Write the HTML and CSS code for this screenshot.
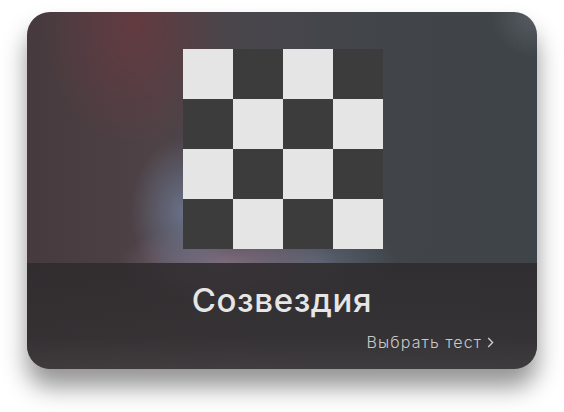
FILE: index.html
```html
<!DOCTYPE html>
<html lang="ru">
<head>
<meta charset="utf-8">
<title>Созвездия</title>
<link rel="stylesheet" href="styles.css">
</head>
<body>
<div class="card">
  <div class="art">
    <div class="board">
      <span class="l"></span><span class="d"></span><span class="l"></span><span class="d"></span>
      <span class="d"></span><span class="l"></span><span class="d"></span><span class="l"></span>
      <span class="l"></span><span class="d"></span><span class="l"></span><span class="d"></span>
      <span class="d"></span><span class="l"></span><span class="d"></span><span class="l"></span>
    </div>
  </div>
  <div class="band">
    <h1 class="title">Созвездия</h1>
    <a class="link" href="#">Выбрать тест <svg class="chev" width="7" height="11" viewBox="0 0 7 11"><path d="M1.2 1 L5.6 5.5 L1.2 10" fill="none" stroke="currentColor" stroke-width="1.4"/></svg></a>
  </div>
</div>
</body>
</html>
```

FILE: styles.css
```css
* { box-sizing: border-box; }
html, body { margin: 0; padding: 0; background: #ffffff; }
body {
  width: 564px;
  height: 412px;
  padding: 12px 27px 0 27px;
  font-family: Inter, "Noto Sans", sans-serif;
}
.card {
  width: 510px;
  height: 357px;
  border-radius: 23px;
  overflow: hidden;
  display: flex;
  flex-direction: column;
  box-shadow: 0 18px 24px rgba(0,0,0,0.42);
  background:
    radial-gradient(ellipse 55px 75px at 158px 200px, rgba(110,122,148,0.85), rgba(110,122,148,0) 100%),
    radial-gradient(ellipse 110px 40px at 200px 252px, rgba(140,118,138,0.8), rgba(140,118,138,0) 100%),
    radial-gradient(ellipse 80px 40px at 290px 250px, rgba(100,115,135,0.6), rgba(100,115,135,0) 100%),
    radial-gradient(ellipse 90px 120px at 105px 15px, rgba(100,58,64,0.9), rgba(100,58,64,0) 100%),
    radial-gradient(ellipse 40px 40px at 505px 5px, rgba(95,100,108,0.7), rgba(95,100,108,0) 100%),
    linear-gradient(90deg, #463a3e 0%, #4e4246 25%, #48464c 45%, #41454a 70%, #3f4448 100%);
}
.art {
  height: 251px;
  flex: none;
  display: flex;
  justify-content: center;
  padding: 37px 0 0 2px;
}
.board {
  width: 200px;
  height: 200px;
  display: grid;
  grid-template-columns: repeat(4, 50px);
  grid-template-rows: repeat(4, 50px);
}
.board .l { background: #e5e5e5; }
.board .d { background: #3c3c3c; }
.band {
  flex: 1;
  display: flex;
  flex-direction: column;
  align-items: center;
  background: linear-gradient(180deg, rgba(46,43,45,0.88) 0%, rgba(50,47,49,0.85) 70%, rgba(62,58,60,0.8) 100%);
}
.title {
  margin: 17px 0 0 0;
  font-size: 33px;
  line-height: 40px;
  font-weight: 500;
  color: #e6e6e6;
  letter-spacing: 0.6px;
}
.link {
  align-self: flex-end;
  margin: 12px 43px 0 0;
  font-size: 16px;
  line-height: 20px;
  font-weight: 300;
  color: #c9c9c9;
  text-decoration: none;
  letter-spacing: 1.1px;
  display: flex;
  align-items: center;
  gap: 5px;
}
.chev { display: block; margin-top: 1px; }
```
